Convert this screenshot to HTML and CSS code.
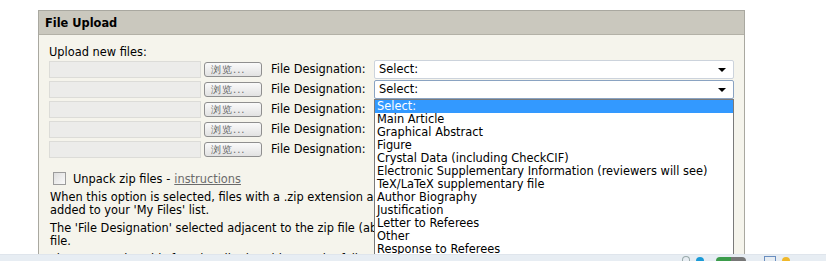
FILE: index.html
```html
<!DOCTYPE html>
<html lang="en">
<head>
    <meta charset="UTF-8">
    <title>File Upload</title>
    <link rel="stylesheet" href="styles.css">
</head>
<body>
    <div class="screen">
        <div class="panel">
            <div class="panel-head">File Upload</div>
            <div class="panel-body">
                <div class="intro">Upload new files:</div>

                <div class="file-row">
                    <span class="file-box"></span>
                    <span class="browse">浏览...</span>
                    <span class="label">File Designation:</span>
                    <span class="select">Select:<span class="arrow"></span></span>
                </div>
                <div class="file-row">
                    <span class="file-box"></span>
                    <span class="browse">浏览...</span>
                    <span class="label">File Designation:</span>
                    <span class="select focused">Select:<span class="arrow"></span>
                        <!-- open option list -->
                        <ul class="options">
                            <li class="picked">Select:</li>
                            <li>Main Article</li>
                            <li>Graphical Abstract</li>
                            <li>Figure</li>
                            <li>Crystal Data (including CheckCIF)</li>
                            <li>Electronic Supplementary Information (reviewers will see)</li>
                            <li>TeX/LaTeX supplementary file</li>
                            <li>Author Biography</li>
                            <li>Justification</li>
                            <li>Letter to Referees</li>
                            <li>Other</li>
                            <li>Response to Referees</li>
                        </ul>
                    </span>
                </div>
                <div class="file-row">
                    <span class="file-box"></span>
                    <span class="browse">浏览...</span>
                    <span class="label">File Designation:</span>
                </div>
                <div class="file-row">
                    <span class="file-box"></span>
                    <span class="browse">浏览...</span>
                    <span class="label">File Designation:</span>
                </div>
                <div class="file-row">
                    <span class="file-box"></span>
                    <span class="browse">浏览...</span>
                    <span class="label">File Designation:</span>
                </div>

                <div class="unpack">
                    <span class="checkbox"></span>
                    Unpack zip files - <a href="#">instructions</a>
                </div>
                <p>When this option is selected, files with a .zip extension a<br>added to your 'My Files' list.</p>
                <p>The 'File Designation' selected adjacent to the zip file (ab<br>file.</p>
                <p>Please note that this functionality is subject to the following</p>
            </div>
        </div>

        <div class="taskbar">
            <span class="tray dot"></span>
            <span class="tray ring"></span>
            <span class="tray pill"></span>
            <span class="tray square"></span>
            <span class="tray sun"></span>
        </div>
    </div>
</body>
</html>
```

FILE: styles.css
```css
body {
    margin: 0;
    background-color: #fff;
    font-family: 'DejaVu Sans', Verdana, sans-serif;
    font-size: 11.4px;
    color: #000;
}

.screen {
    height: 261px;
    display: flex;
    flex-direction: column;
    overflow: hidden;
}

.panel {
    flex: 1;
    margin: 10px 0 0 38px;
    width: 705px;
    border: 1px solid #a9a8a0;
    border-bottom: none;
    background-color: #f5f4ec;
    overflow: hidden;
}

.panel-head {
    height: 23px;
    line-height: 24px;
    padding-left: 6px;
    background-color: #cac8be;
    border-bottom: 1px solid #b3b1a7;
    font-weight: bold;
    font-size: 11.4px;
}

.panel-body {
    padding: 10px 0 0 10px;
}

.intro {
    height: 14px;
    line-height: 14px;
}

.file-row {
    display: flex;
    align-items: center;
    height: 20px;
}

.file-box {
    width: 150px;
    height: 15px;
    border: 1px solid #dcdcd8;
    background-color: #ececea;
}

.browse {
    margin-left: 3px;
    width: 56px;
    height: 13px;
    line-height: 13px;
    border: 1px solid #8f8f8f;
    border-radius: 3px;
    background: linear-gradient(#fafafa, #e2e2e2);
    color: #6a6a6a;
    font-size: 10px;
    text-indent: 6px;
    letter-spacing: 1px;
}

.label {
    margin-left: 9px;
    width: 103px;
}

.select {
    position: relative;
    width: 354px;
    height: 17px;
    line-height: 17px;
    padding-left: 4px;
    border: 1px solid #ccd3dc;
    border-radius: 2px;
    background-color: #fff;
}

.select.focused {
    border-color: #8aa3c2;
}

.arrow {
    position: absolute;
    right: 7px;
    top: 7px;
    border-left: 4px solid transparent;
    border-right: 4px solid transparent;
    border-top: 4px solid #000;
}

.options {
    position: absolute;
    left: -1px;
    top: 18px;
    z-index: 2;
    width: 358px;
    margin: 0;
    padding: 0;
    list-style: none;
    background-color: #fff;
    border: 1px solid #7a7a7a;
    line-height: 13px;
}

.options li {
    padding-left: 2px;
    height: 13px;
    white-space: nowrap;
}

.options li.picked {
    background-color: #3399ff;
    color: #fff;
}

.unpack {
    display: flex;
    align-items: center;
    margin-top: 12px;
    padding-left: 4px;
    height: 15px;
}

.checkbox {
    width: 11px;
    height: 11px;
    border: 1px solid #9c9c9c;
    background: linear-gradient(135deg, #dedede, #fafafa);
    margin-right: 7px;
}

.unpack a {
    color: #6b6b6b;
    margin-left: 4px;
}

p {
    margin: 5px 0 4px 1px;
    line-height: 13px;
    white-space: nowrap;
}

.taskbar {
    height: 6px;
    background-color: #e7edf3;
    border-top: 1px solid #dfe5ec;
    display: flex;
    align-items: flex-end;
    padding-left: 682px;
    gap: 6px;
}

.tray {
    display: block;
    height: 4px;
}

.dot {
    width: 6px;
    border: 1px solid #9aa;
    border-bottom: none;
    border-radius: 4px 4px 0 0;
}

.ring {
    width: 8px;
    background-color: #1a9ad6;
    border-radius: 5px 5px 0 0;
}

.pill {
    width: 30px;
    background: linear-gradient(90deg, #3b9c4b 50%, #777 50%);
    border-radius: 4px 4px 0 0;
    margin-left: 6px;
}

.square {
    width: 10px;
    border: 1px solid #6a8ec0;
    border-bottom: none;
    margin-left: 12px;
}

.sun {
    width: 8px;
    background-color: #f0b82a;
    border-radius: 5px 5px 0 0;
}
```
